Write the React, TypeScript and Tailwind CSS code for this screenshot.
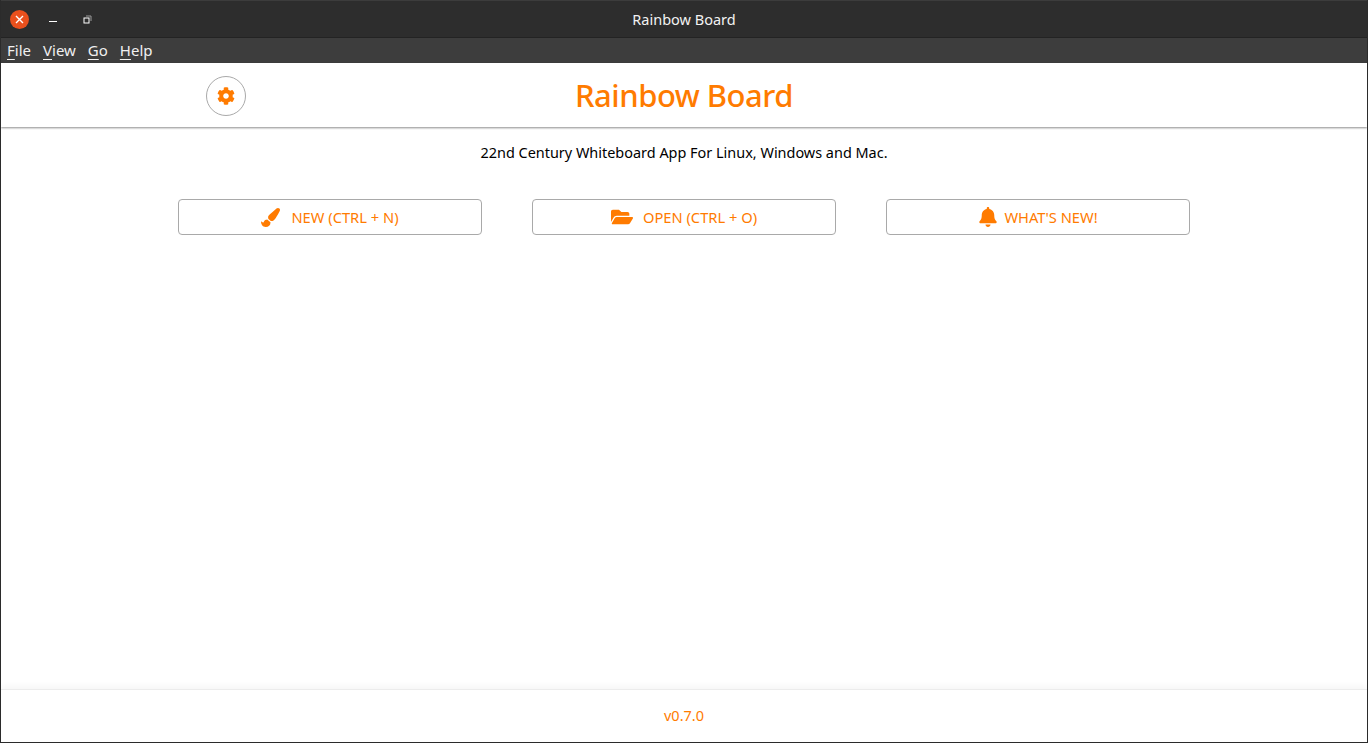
import { FaBell, FaCog, FaFolderOpen, FaPaintBrush } from "react-icons/fa";

const MENU = [
  { id: 1, first: "F", rest: "ile" },
  { id: 2, first: "V", rest: "iew" },
  { id: 3, first: "G", rest: "o" },
  { id: 4, first: "H", rest: "elp" },
];

const BUTTONS = [
  { id: 1, label: "NEW (CTRL + N)", icon: FaPaintBrush, iconClass: "text-[19px] mr-[11px]" },
  { id: 2, label: "OPEN (CTRL + O)", icon: FaFolderOpen, iconClass: "text-[22px] mr-[10px]" },
  { id: 3, label: "WHAT'S NEW!", icon: FaBell, iconClass: "text-[20px] mr-[6px]" },
];

const TitleBar = () => (
  <div className="grid grid-cols-[1fr_auto_1fr] items-center h-[38px] bg-[#2d2d2d] border-t border-[#3c3c3c] border-b border-b-[#232323]">
    <div className="flex items-center pl-[9px]">
      <div className="flex items-center justify-center w-[19px] h-[19px] rounded-full bg-[#e9501d]">
        <svg width="9" height="9" viewBox="0 0 9 9" fill="none" stroke="#ffffff" strokeWidth="1.4">
          <path d="M1 1l7 7M8 1l-7 7" />
        </svg>
      </div>
      <svg className="ml-[20px] mt-[2px]" width="8" height="8" viewBox="0 0 8 8" fill="none" stroke="#ffffff" strokeWidth="1">
        <path d="M0 5.5h8" />
      </svg>
      <svg className="ml-[26px]" width="9" height="9" viewBox="0 0 9 9" fill="none" stroke="#ffffff" strokeWidth="1">
        <rect x="1" y="3" width="5" height="5" />
        <path d="M3 1h5v5" stroke="#9a9a9a" />
      </svg>
    </div>
    <div className="pt-[1px] text-[#f2f2f2] text-[14.5px] font-['Noto_Sans',sans-serif]">Rainbow Board</div>
    <div />
  </div>
);

const MenuBar = () => (
  <div className="flex items-center gap-[12px] h-[25px] pl-[6px] bg-[#3d3d3d] text-[#f0f0f0] text-[15px] font-['Noto_Sans',sans-serif]">
    {MENU.map((item) => (
      <span key={item.id}>
        <span className="underline underline-offset-[3px]">{item.first}</span>
        {item.rest}
      </span>
    ))}
  </div>
);

export default function App() {
  return (
    <div className="flex flex-col h-[743px] bg-white border-x border-b border-[#2b2b2b] font-['Open_Sans',sans-serif] overflow-hidden">
      <TitleBar />
      <MenuBar />

      <header className="grid grid-cols-[1fr_auto_1fr] items-center h-[64px] shrink-0 bg-white shadow-[0_1px_2px_rgba(0,0,0,0.45)]">
        <div className="pl-[205px] pt-[2px]">
          <button className="flex items-center justify-center w-[40px] h-[40px] rounded-full border border-[#a9a9a9] text-[#ff7b00] text-[18px]">
            <FaCog />
          </button>
        </div>
        <h1 className="text-[#ff7b00] text-[31px] font-medium tracking-[-0.5px] font-['Noto_Sans',sans-serif]">Rainbow Board</h1>
        <div />
      </header>

      <main className="flex-1 flex flex-col items-center">
        <p className="mt-[15px] text-black text-[14.45px] leading-[22px] font-['Noto_Sans',sans-serif]">
          22nd Century Whiteboard App For Linux, Windows and Mac.
        </p>
        <div className="flex gap-[50px] mt-[35px]">
          {BUTTONS.map((item) => (
            <button
              key={item.id}
              className="flex items-center justify-center w-[304px] h-[36px] rounded-[4px] border border-[#a9a9a9] text-[#ff7b00] text-[14.7px] font-['Noto_Sans',sans-serif]"
            >
              <item.icon className={item.iconClass} />
              {item.label}
            </button>
          ))}
        </div>
      </main>

      <footer className="flex items-center justify-center h-[53px] shrink-0 border-t border-[#ececec] shadow-[0_-3px_6px_rgba(0,0,0,0.04)] text-[#ff7b00] text-[14.5px] font-['Noto_Sans',sans-serif]">
        v0.7.0
      </footer>
    </div>
  );
}
